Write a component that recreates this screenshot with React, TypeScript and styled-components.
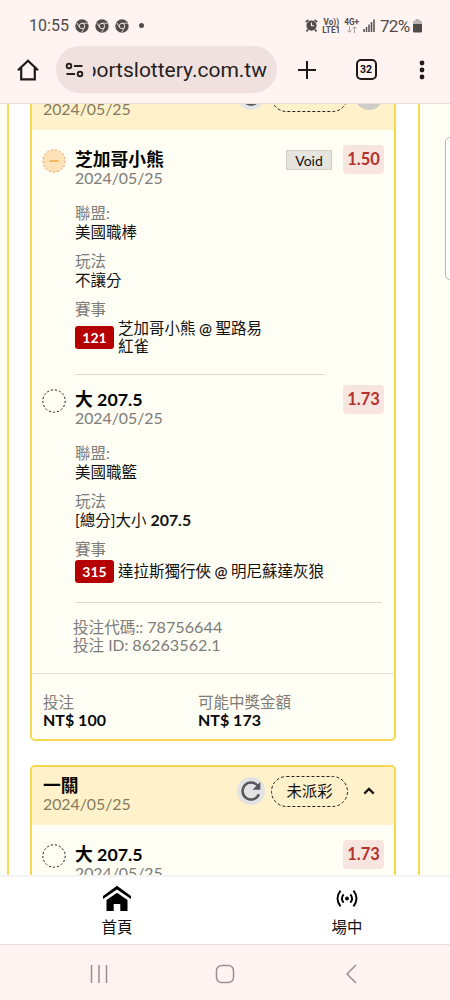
import React from "react";
import styled, { createGlobalStyle } from "styled-components";

const GlobalStyle = createGlobalStyle`
  * { box-sizing: border-box; }
  body { margin: 0; background: #fff; }
`;

const Screen = styled.div`
  width: 450px;
  height: 1000px;
  display: flex;
  flex-direction: column;
  overflow: hidden;
  font-family: Lato, "Noto Sans CJK TC", sans-serif;
  color: #111;
`;

const StatusBar = styled.header`
  height: 46px;
  padding: 5px 28px 0 29px;
  display: flex;
  align-items: center;
  background: #fff4f2;
  color: #514b4a;
  font: 16px/20px Roboto, sans-serif;
`;
const Clock = styled.span`
  width: 46px;
  letter-spacing: 0.05px;
`;
const StatusIcons = styled.div<{ $gap: number }>`
  display: flex;
  align-items: center;
  gap: ${(p) => p.$gap}px;
`;
const Dot = styled.i`
  width: 5px;
  height: 5px;
  margin-left: 4px;
  border-radius: 50%;
  background: #514b4a;
`;
const Fill = styled.div`
  flex: 1;
`;
const Stack = styled.div`
  display: flex;
  flex-direction: column;
  align-items: center;
  font: 700 8.2px/8px Roboto, sans-serif;
  white-space: nowrap;
`;
const Battery = styled.span`
  margin-left: 5px;
  margin-right: 2px;
  font-size: 17px;
  width: 31px;
  letter-spacing: -0.7px;
`;

const Toolbar = styled.div`
  height: 58px;
  display: flex;
  align-items: flex-start;
  background: #fff4f2;
  border-bottom: 1px solid #e9e0df;
`;
const ToolButton = styled.div<{ $w: number }>`
  width: ${(p) => p.$w}px;
  height: 47px;
  display: flex;
  align-items: center;
  justify-content: center;
`;
const UrlPill = styled.div`
  width: 221px;
  height: 47px;
  padding: 0 10px 0 9px;
  display: flex;
  align-items: center;
  justify-content: space-between;
  border-radius: 24px;
  background: #f0e1df;
`;
const Url = styled.div`
  width: 174px;
  display: flex;
  justify-content: flex-end;
  overflow: hidden;
  white-space: nowrap;
  font: 21px/28px Roboto, sans-serif;
  color: #261f1e;
`;
const TabCount = styled.div`
  width: 21px;
  height: 21px;
  display: flex;
  align-items: center;
  justify-content: center;
  border: 2px solid #1f1a19;
  border-radius: 5px;
  font: 700 10.5px/16px Roboto, sans-serif;
`;

const Page = styled.main`
  position: relative;
  height: 771px;
  overflow: hidden;
  background: #fffef5;
  padding: 0 30px 0 7px;
`;
const Column = styled.section`
  width: 412.5px;
  height: 1200px;
  padding: 0 21px;
  border: solid #f8dc58;
  border-width: 0 2px;
  background: #fff;
  display: flex;
  flex-direction: column;
  gap: 24px;
`;
const SideHandle = styled.aside`
  position: absolute;
  left: 445px;
  top: 33px;
  width: 20px;
  height: 143px;
  border: 1px solid #b8b7b4;
  border-radius: 5px;
  background: #fffefa;
`;

const Card = styled.article<{ $scrolled?: boolean }>`
  width: 366px;
  flex: none;
  margin-top: ${(p) => (p.$scrolled ? -34 : 0)}px;
  border: 2px solid #f6d84e;
  border-radius: 5px;
  background: #fffef5;
  overflow: hidden;
`;
const CardHead = styled.div`
  height: 58px;
  padding: 0 11px 0 11px;
  display: flex;
  background: #fff1ca;
`;
const HeadText = styled.div`
  flex: 1;
  padding-top: 8px;
`;
const HeadActions = styled.div`
  height: 48px;
  display: flex;
  align-items: center;
`;
const RefreshButton = styled.div`
  width: 28px;
  height: 28px;
  border-radius: 50%;
  background: #e3e3e4;
  display: flex;
  align-items: center;
  justify-content: center;
`;
const StatusPill = styled.div`
  margin: 0 7px 0 6px;
  display: flex;
  position: relative;
  width: 77px;
  height: 31px;
  align-items: center;
  justify-content: center;
  font-size: 15.4px;
  line-height: 20px;
`;
const PillOutline = styled.svg`
  position: absolute;
  inset: 0;
`;
const Toggle = styled.div<{ $pressed?: boolean }>`
  width: 28px;
  height: 28px;
  border-radius: 50%;
  background: ${(p) => (p.$pressed ? "#cfcdc8" : "transparent")};
  display: flex;
  align-items: center;
  justify-content: center;
`;

const Title = styled.div`
  height: 20px;
  font-size: 17.8px;
  line-height: 20px;
  font-weight: 700;
  color: #060606;
  white-space: nowrap;
`;
const DateText = styled.div<{ $onGold?: boolean }>`
  height: 18px;
  font-size: 15.9px;
  line-height: 18px;
  letter-spacing: -0.05px;
  color: ${(p) => (p.$onGold ? "#857b5f" : "#7d7c78")};
`;

const Leg = styled.div<{ $first?: boolean }>`
  display: flex;
  padding: ${(p) => (p.$first ? 19 : 14)}px 10px 0 10px;
`;
const LegMark = styled.div`
  width: 33px;
`;
const LegBody = styled.div`
  flex: 1;
`;
const LegTop = styled.div`
  display: flex;
  justify-content: space-between;
  height: 38px;
  margin-bottom: 17px;
`;
const Prices = styled.div`
  display: flex;
  align-items: center;
  gap: 11px;
  height: 29px;
  margin-top: -4px;
`;
const VoidTag = styled.span`
  width: 46px;
  height: 20px;
  border: 1px solid #cfcdc5;
  background: #e6e4de;
  font-size: 14px;
  line-height: 19px;
  text-align: center;
  margin-top: 1px;
`;
const Odds = styled.span`
  width: 41px;
  height: 29px;
  border-radius: 4px;
  background: #f8e5df;
  color: #b3332c;
  font-size: 16.5px;
  font-weight: 700;
  line-height: 29px;
  text-align: center;
`;
const Label = styled.div`
  height: 18px;
  font-size: 15.5px;
  line-height: 18px;
  color: #7d7c78;
  white-space: nowrap;
`;
const Value = styled.div`
  height: 20px;
  margin-bottom: 10px;
  font-size: 15.5px;
  line-height: 20px;
  white-space: nowrap;
  b { font-weight: 700; font-size: 15.9px; }
`;
const Match = styled.div`
  margin-top: 2px;
  display: flex;
  align-items: center;
  gap: 4px;
  font-size: 15.5px;
  line-height: 17.5px;
  white-space: nowrap;
  b { font-weight: 600; margin: 0 -0.5px; }
`;
const MatchNo = styled.span`
  width: 39px;
  height: 23px;
  border-radius: 3px;
  background: #b50003;
  color: #fff;
  font-size: 14px;
  font-weight: 700;
  line-height: 23px;
  text-align: center;
`;
const Divider = styled.div<{ $w: number }>`
  width: ${(p) => p.$w}px;
  height: 1px;
  margin-top: 19px;
  background: #dddbd2;
`;
const Reference = styled.div`
  padding: 16px 0 20px 41px;
  height: 71px;
  font-size: 15.6px;
  line-height: 17.5px;
  color: #7d7c78;
  border-bottom: 1px solid #e4e1d6;
`;
const Code = styled.span`
  font-size: 16.2px;
  line-height: 1;
`;
const Totals = styled.div`
  display: flex;
  height: 65px;
  padding: 19px 11px 0;
`;
const Total = styled.div<{ $w: number }>`
  width: ${(p) => p.$w}px;
`;
const Amount = styled.div`
  font-size: 16px;
  font-weight: 700;
  line-height: 17px;
  color: #080808;
`;

const TabBar = styled.nav`
  height: 70px;
  display: flex;
  padding-left: 2px;
  background: #fff;
  border-top: 2px solid #f5f4f4;
  border-bottom: 1px solid #e5dfde;
`;
const Tab = styled.div<{ $w: number }>`
  flex: none;
  width: ${(p) => p.$w}px;
  display: flex;
  flex-direction: column;
  align-items: center;
  padding-top: 8px;
  gap: 5px;
  font-size: 15.4px;
  line-height: 20px;
`;
const SystemNav = styled.footer`
  height: 55px;
  display: flex;
  align-items: center;
  padding: 2px 36px 0;
  background: #fff4f2;
`;
const SystemKey = styled.div`
  flex: 1;
  display: flex;
  justify-content: center;
`;

const ChromeIcon = () => (
  <svg width="14" height="14" viewBox="0 0 14 14">
    <circle cx="7" cy="7" r="6.7" fill="#514b4a" />
    <g fill="none" stroke="#fff4f2" strokeWidth="0.8">
      <circle cx="7" cy="7" r="2.7" />
      <path d="M7 4.2h5.8M4.6 8.4 1.7 3.6M9.4 8.4 6.7 13.3" />
    </g>
  </svg>
);

const AlarmIcon = () => (
  <svg width="13" height="13" viewBox="0 0 13 13">
    <circle cx="6.5" cy="6.6" r="5.1" fill="#514b4a" />
    <path d="M.8 3.2 3.4.9M12.2 3.2 9.6.9M3 10.4l-1.5 2M10 10.4l1.5 2" stroke="#514b4a" strokeWidth="1.7" />
    <path d="M6.5 3.6v3.2h2.6" fill="none" stroke="#fff4f2" strokeWidth="1.1" />
  </svg>
);

const SignalIcon = () => (
  <svg width="12" height="13" viewBox="0 0 12 13">
    <path d="M1 13v-3M3.5 13V8M6 13V5.5M8.5 13V3M11 13V.5" stroke="#514b4a" strokeWidth="1.5" />
  </svg>
);

const BatteryIcon = () => (
  <svg width="9" height="14" viewBox="0 0 10 14" preserveAspectRatio="none">
    <path d="M3 0h4v1.5H8.500q1.500 0 1.500 1.500V5H0V3Q0 1.500 1.500 1.500H3z" fill="#bcb4b2" />
    <path d="M0 5h10v7.200q0 1.300-1.300 1.300H1.300Q0 13.500 0 12.200z" fill="#514b4a" />
  </svg>
);

const RefreshIcon = () => (
  <svg width="22" height="22" viewBox="0 0 22 22">
    <path d="M18.900 14.300A8.500 8.500 0 1 1 17.600 5.600" fill="none" stroke="#56585c" strokeWidth="2.500" />
    <path d="M20.300 2v7.800h-7.800z" fill="#56585c" />
  </svg>
);

const Mark = ({ voided }: { voided?: boolean }) => (
  <svg width="24" height="24" viewBox="0 0 24 24" style={{ display: "block" }}>
    <circle
      cx="12"
      cy="12"
      r="11.200"
      fill={voided ? "#fde2b8" : "none"}
      stroke={voided ? "#e9a777" : "#222"}
      strokeWidth="1"
      strokeDasharray="2.200 1.900"
    />
    {voided && <path d="M7.500 12h9" stroke="#efa73c" strokeWidth="1.300" />}
  </svg>
);

const Header = ({ title, pressed }: { title: string; pressed?: boolean }) => (
  <CardHead>
    <HeadText>
      <Title>{title}</Title>
      <DateText $onGold>2024/05/25</DateText>
    </HeadText>
    <HeadActions>
      <RefreshButton><RefreshIcon /></RefreshButton>
      <StatusPill>
        <PillOutline width="77" height="31" viewBox="0 0 77 31">
          <rect x=".5" y=".5" width="76" height="30" rx="15" fill="none" stroke="#222" strokeDasharray="3 2" />
        </PillOutline>
        未派彩
      </StatusPill>
      <Toggle $pressed={pressed}>
        <svg width="12" height="8" viewBox="0 0 12 8">
          <path d="M1.300 6.600 6 1.900l4.700 4.700" fill="none" stroke="#161616" strokeWidth="2.200" />
        </svg>
      </Toggle>
    </HeadActions>
  </CardHead>
);

type LegProps = {
  first?: boolean;
  voided?: boolean;
  title: string;
  odds: string;
  league: string;
  market: React.ReactNode;
  matchNo: string;
  match: React.ReactNode;
  rule: number;
};

const BetLeg = (p: LegProps) => (
  <Leg $first={p.first}>
    <LegMark><Mark voided={p.voided} /></LegMark>
    <LegBody>
      <LegTop>
        <div>
          <Title>{p.title}</Title>
          <DateText>2024/05/25</DateText>
        </div>
        <Prices>
          {p.voided && <VoidTag>Void</VoidTag>}
          <Odds>{p.odds}</Odds>
        </Prices>
      </LegTop>
      <Label>聯盟:</Label>
      <Value>{p.league}</Value>
      <Label>玩法</Label>
      <Value>{p.market}</Value>
      <Label>賽事</Label>
      <Match>
        <MatchNo>{p.matchNo}</MatchNo>
        <div>{p.match}</div>
      </Match>
      <Divider $w={p.rule} />
    </LegBody>
  </Leg>
);

const totalPointsLeg = {
  title: "大 207.5",
  odds: "1.73",
  league: "美國職籃",
  market: <>[總分]大小 <b>207.5</b></>,
  matchNo: "315",
  match: <>達拉斯獨行俠 <b>@</b> 明尼蘇達灰狼</>,
  rule: 307,
};

export default function App() {
  return (
    <Screen>
      <GlobalStyle />
      <StatusBar>
        <Clock>10:55</Clock>
        <StatusIcons $gap={6}>
          <ChromeIcon />
          <ChromeIcon />
          <ChromeIcon />
          <Dot />
        </StatusIcons>
        <Fill />
        <StatusIcons $gap={4}>
          <AlarmIcon />
          <Stack><span>Vo))</span><span>LTE1</span></Stack>
          <Stack>
            <span>4G+</span>
            <svg width="10" height="8" viewBox="0 0 10 8">
              <path d="M2.500 0v6M.500 4.300l2 2 2-2M7.500 7V1M5.500 2.700l2-2 2 2" fill="none" stroke="#aaa2a0" />
            </svg>
          </Stack>
          <SignalIcon />
        </StatusIcons>
        <Battery>72%</Battery>
        <BatteryIcon />
      </StatusBar>
      <Toolbar>
        <ToolButton $w={56}>
          <svg width="22" height="22" viewBox="0 0 22 22">
            <path d="M1 11.300 11 1.700l10 9.600M4.200 9v11.400h13.600V9" fill="none" stroke="#1f1a19" strokeWidth="2.200" />
          </svg>
        </ToolButton>
        <UrlPill>
          <svg width="19" height="16" viewBox="0 0 19 16">
            <g fill="none" stroke="#261f1e" strokeWidth="1.900">
              <circle cx="4" cy="4" r="2.300" />
              <circle cx="15" cy="12" r="2.300" />
              <path d="M9 4h8.500M1.500 12H10" />
            </g>
          </svg>
          <Url>sportslottery.com.tw</Url>
        </UrlPill>
        <ToolButton $w={60}>
          <svg width="18" height="18" viewBox="0 0 18 18">
            <path d="M9 0v18M0 9h18" stroke="#1f1a19" strokeWidth="2" />
          </svg>
        </ToolButton>
        <ToolButton $w={58}><TabCount>32</TabCount></ToolButton>
        <ToolButton $w={53}>
          <svg width="6" height="20" viewBox="0 0 6 20" fill="#1f1a19">
            <circle cx="3" cy="3" r="2.400" />
            <circle cx="3" cy="10" r="2.400" />
            <circle cx="3" cy="17" r="2.400" />
          </svg>
        </ToolButton>
      </Toolbar>

      <Page>
        <Column>
          <Card $scrolled>
            <Header title="二關" pressed />
            <BetLeg
              first
              voided
              title="芝加哥小熊"
              odds="1.50"
              league="美國職棒"
              market="不讓分"
              matchNo="121"
              match={<>芝加哥小熊 <b>@</b> 聖路易<br />紅雀</>}
              rule={250}
            />
            <BetLeg {...totalPointsLeg} />
            <Reference>
              投注代碼:: <Code>78756644</Code><br />
              投注 ID: <Code>86263562.1</Code>
            </Reference>
            <Totals>
              <Total $w={155}>
                <Label>投注</Label>
                <Amount>NT$ 100</Amount>
              </Total>
              <Total $w={180}>
                <Label>可能中獎金額</Label>
                <Amount>NT$ 173</Amount>
              </Total>
            </Totals>
          </Card>
          <Card>
            <Header title="一關" />
            <BetLeg first {...totalPointsLeg} />
          </Card>
        </Column>
        <SideHandle />
      </Page>

      <TabBar>
        <Tab $w={230}>
          <svg width="30" height="27" viewBox="0 0 30 27">
            <path d="M1 14V11L15 .800 29 11v3L15 4.600z" />
            <path d="M4.500 15 15 7.800 25.500 15v11h-7.200v-7h-6.600v7H4.500z" />
          </svg>
          首頁
        </Tab>
        <Tab $w={230}>
          <svg width="22" height="27" viewBox="0 0 22 27">
            <circle cx="11" cy="13.500" r="1.900" />
            <g fill="none" stroke="#000" strokeWidth="1.900">
              <path d="M7.700 9.300q-3.500 4.200 0 8.400M14.300 9.300q3.500 4.200 0 8.400" />
              <path d="M4.500 5.700q-6 7.800 0 15.600M17.500 5.700q6 7.800 0 15.600" />
            </g>
          </svg>
          場中
        </Tab>
      </TabBar>
      <SystemNav>
        <SystemKey>
          <svg width="18" height="18" viewBox="0 0 18 18">
            <path d="M1.500 0v18M9 0v18M16.500 0v18" stroke="#989190" strokeWidth="1.500" />
          </svg>
        </SystemKey>
        <SystemKey>
          <svg width="20" height="20" viewBox="0 0 20 20">
            <rect x="1.500" y="1.500" width="17" height="17" rx="5" fill="none" stroke="#989190" strokeWidth="1.500" />
          </svg>
        </SystemKey>
        <SystemKey>
          <svg width="12" height="20" viewBox="0 0 12 20">
            <path d="M11 1 2 10l9 9" fill="none" stroke="#989190" strokeWidth="1.500" />
          </svg>
        </SystemKey>
      </SystemNav>
    </Screen>
  );
}
